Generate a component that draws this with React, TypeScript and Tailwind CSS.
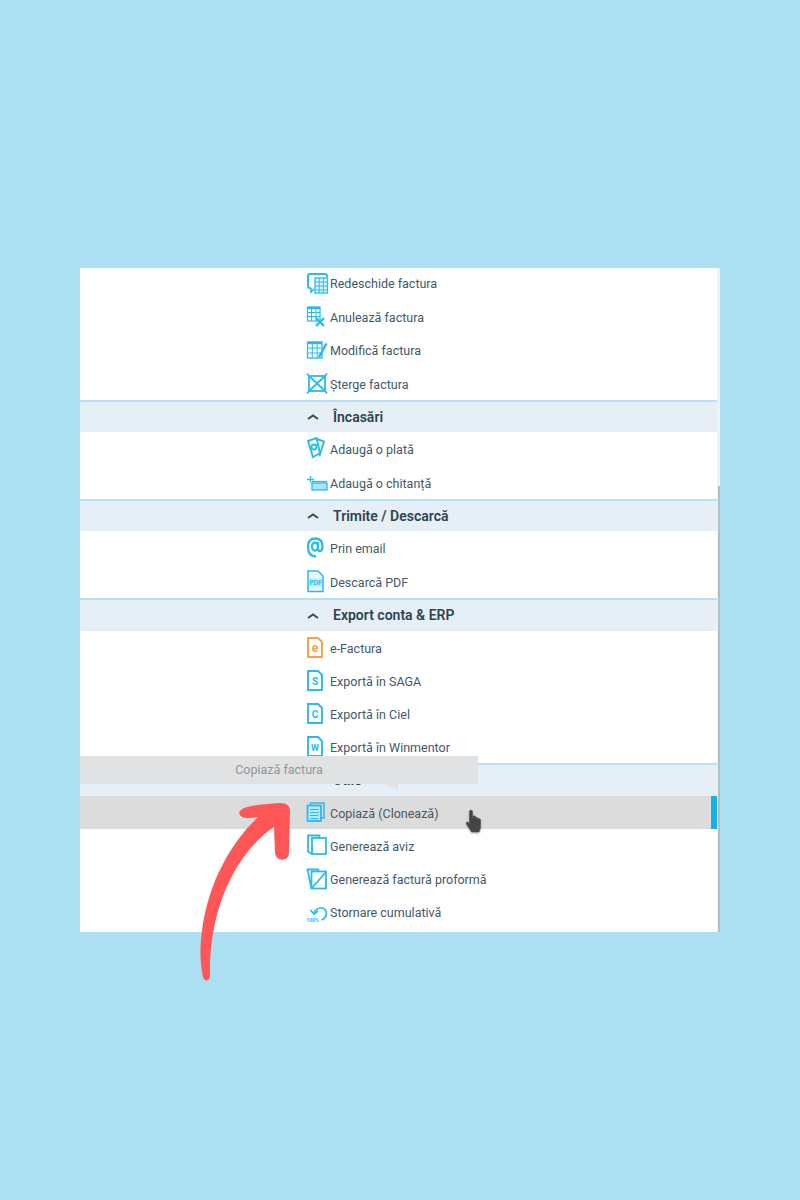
import React from "react";

const B = "#29bbec";

const Svg = ({ children, w = 1.6 }: { children: React.ReactNode; w?: number }) => (
  <svg width="24" height="24" viewBox="0 0 24 24" fill="none" stroke={B} strokeWidth={w} className="shrink-0">
    {children}
  </svg>
);

const Doc = ({ letter, size, color = B }: { letter: string; size: number; color?: string }) => (
  <svg width="24" height="24" viewBox="0 0 24 24" fill="none" stroke={color} strokeWidth="1.9" className="shrink-0">
    <path d="M2 3h10l4 4v15H2z" />
    <text x="9" y="16.500" textAnchor="middle" fontSize={size} fontFamily="Roboto, sans-serif" fontWeight="700" fill={color} stroke="none">
      {letter}
    </text>
  </svg>
);

const icons: Record<string, React.ReactNode> = {
  reopen: (
    <Svg>
      <path d="M5 16H3.500Q2 16 2 14V4Q2 2 4 2h15q2 0 2 2v1" strokeWidth="2" />
      <path d="M5 16v4l3-3" />
      <rect x="9" y="6" width="12.500" height="15" fill="#e4f6fc" strokeWidth="1.3" />
      <path d="M9 10h12.500M9 14h12.500M9 18h12.500M13.200 6v15M17.300 6v15" strokeWidth="1" />
    </Svg>
  ),
  cancel: (
    <Svg>
      <rect x="1.500" y="2" width="12.500" height="14" strokeWidth="1.2" />
      <path d="M1.500 3h12.500" strokeWidth="2.400" />
      <path d="M1.500 7.500h12.500M1.500 11.500h12.500M5.500 2v14M10 2v14" strokeWidth="1" />
      <path d="M10 13l8 8M18 13l-8 8" strokeWidth="2.400" />
    </Svg>
  ),
  edit: (
    <Svg>
      <rect x="1.500" y="4" width="14.500" height="16" strokeWidth="1.300" />
      <path d="M1.500 5h14.500" strokeWidth="2.400" />
      <path d="M1.500 10h14.500M1.500 15h14.500M6.300 4v16M11.200 4v16" strokeWidth="1" />
      <path d="M13 19l7.500-13.500" strokeWidth="2.400" />
    </Svg>
  ),
  del: (
    <Svg w={1.8}>
      <rect x="3" y="5" width="16" height="15" />
      <path d="M3 5l16 15M19 5L3 20M1 2.500l2 2.500M21 2.500L19 5M1 22.500L3 20M21 22.500L19 20" />
    </Svg>
  ),
  pay: (
    <Svg w={1.900}>
      <path d="M2 5l8.500-3L14 17l-7 4z" />
      <circle cx="8" cy="11" r="2.500" />
      <path d="M11 3l7 2.500L13.500 20" />
    </Svg>
  ),
  receipt: (
    <Svg w={1.300}>
      <path d="M1 9.500h7M4.500 6v7" />
      <rect x="6" y="13" width="15" height="7" fill="#a9e4f8" />
      <path d="M6 11.500h15" />
    </Svg>
  ),
  at: (
    <Svg w={2.300}>
      <ellipse cx="9" cy="11.500" rx="3" ry="4" />
      <path d="M12 7v6.500Q12 16 14 16q2.500 0 2.500-5Q16.500 3.500 9 3.500 2 3.500 2 12q0 9.500 8 9.500" />
    </Svg>
  ),
  pdf: (
    <Svg w={1.500}>
      <path d="M2 2h10l5 5v15.500H2z" fill="#e9f8fd" />
      <rect x="3" y="9.500" width="13" height="8" fill="#bcecfa" stroke="none" />
      <text x="9.500" y="16.200" textAnchor="middle" fontSize="6.500" fontFamily="Roboto, sans-serif" fontWeight="700" fill={B} stroke="none">
        PDF
      </text>
    </Svg>
  ),
  e: <Doc letter="e" size={12} color="#f8a145" />,
  s: <Doc letter="S" size={10} />,
  c: <Doc letter="C" size={10} />,
  w: <Doc letter="W" size={9} />,
  copy: (
    <Svg w={1.500}>
      <path d="M4.500 5V3H18v15h-3" />
      <rect x="1.500" y="5.500" width="13.500" height="15.500" fill="#b5e9f9" strokeWidth="1.800" />
      <path d="M4 9.500h8.500M4 12.500h8.500M4 15.500h8.500M4 18.500h8.500" strokeWidth="1.200" />
    </Svg>
  ),
  aviz: (
    <Svg w={1.800}>
      <path d="M6 21l-4-2.500V2.500h11.500V4.500" />
      <rect x="6" y="5" width="14" height="16" />
    </Svg>
  ),
  proforma: (
    <Svg w={1.800}>
      <path d="M5.500 21.500L1.500 2.500H12l1 2" />
      <rect x="5.500" y="4.500" width="14.500" height="17" />
      <path d="M6 21L20 5" />
    </Svg>
  ),
  storno: (
    <Svg w={1.700}>
      <path d="M8 13q2-5 7-5t5.500 5q0 5-5 7" />
      <path d="M4.500 10l3.500 4 4-3" />
      <text x="6.500" y="21.500" textAnchor="middle" fontSize="5" fontFamily="Roboto, sans-serif" fontWeight="700" fill={B} stroke="none">
        100%
      </text>
    </Svg>
  ),
};

const Item = ({ icon, label, h, active, tx = "pt-[2px]" }: { icon: string; label: string; h: string; active?: boolean; tx?: string }) => (
  <div className={`flex items-center pl-[226px] ${h} ${active ? "bg-[#dcdcdc] border-r-[6px] border-[#0fb5e8]" : ""}`}>
    <span className="mb-[2px] flex h-6 w-6 items-center justify-center">{icons[icon]}</span>
    <span className={`${tx} text-[12.5px] text-[#43586a]`}>{label}</span>
  </div>
);

const Section = ({ label, h = "h-[32px]" }: { label: string; h?: string }) => (
  <div className={`flex items-center bg-[#e6eff5] border-t-2 border-[#b6e0f3] pl-[227px] ${h}`}>
    <svg width="12" height="8" viewBox="0 0 12 8" fill="none" stroke="#334b5a" strokeWidth="1.900">
      <path d="M1 6L6 2.500 11 6" />
    </svg>
    <span className="ml-[14px] text-[14px] font-semibold text-[#2d4452]">{label}</span>
  </div>
);

export default function App() {
  return (
    <div className="min-h-[1200px] bg-[#addff3] px-20 pt-[268px] [font-family:Roboto,sans-serif]">
      <div className="relative flex w-[640px] bg-white">
        <div className="w-[637px] shrink-0">
          <Item icon="reopen" label="Redeschide factura" h="h-[33px]" tx="pt-0" />
          <Item icon="cancel" label="Anulează factura" h="h-[33px]" />
          <Item icon="edit" label="Modifică factura" h="h-[33px]" />
          <Item icon="del" label="Șterge factura" h="h-[33px]" tx="pt-[4px]" />
          <Section label="Încasări" />
          <Item icon="pay" label="Adaugă o plată" h="h-[34px]" />
          <Item icon="receipt" label="Adaugă o chitanță" h="h-[33px]" tx="pt-[4px]" />
          <Section label="Trimite / Descarcă" />
          <Item icon="at" label="Prin email" h="h-[34px]" />
          <Item icon="pdf" label="Descarcă PDF" h="h-[33px]" tx="pt-[4px]" />
          <Section label="Export conta & ERP" h="h-[33px]" />
          <Item icon="e" label="e-Factura" h="h-[33px]" tx="pt-[4px]" />
          <Item icon="s" label="Exportă în SAGA" h="h-[33px]" tx="pt-[4px]" />
          <Item icon="c" label="Exportă în Ciel" h="h-[33px]" tx="pt-[4px]" />
          <Item icon="w" label="Exportă în Winmentor" h="h-[33px]" tx="pt-[4px]" />
          <Section label="Utile" h="h-[33px]" />
          <Item icon="copy" label="Copiază (Clonează)" h="h-[33px]" active tx="pt-[4px]" />
          <Item icon="aviz" label="Generează aviz" h="h-[34px]" />
          <Item icon="proforma" label="Generează factură proformă" h="h-[33px]" />
          <Item icon="storno" label="Stornare cumulativă" h="h-[33px]" />
          <div className="h-[3px]" />
        </div>
        <div className="flex w-[3px] flex-col">
          <div className="h-[218px] bg-[#f1f2f3]" />
          <div className="flex-1 border-l border-[#eef0f1] bg-[#bcbcbc]" />
        </div>

        {/* tooltip */}
        <div className="absolute left-0 top-[488px] flex h-[28px] w-[398px] items-center justify-center bg-[#e1e2e3] pt-[1px] text-[12.5px] text-[#90959a]">
          Copiază factura
          <span className="absolute left-[304px] top-[28px] h-0 w-0 border-r-[14px] border-t-[6px] border-r-transparent border-t-[#e1e2e3] [transform:scaleX(-1)]" />
        </div>

        {/* hand cursor */}
        <svg className="absolute left-[384px] top-[541px] drop-shadow-[0_1px_1px_rgba(0,0,0,0.3)]" width="24" height="26" viewBox="0 0 24 26">
          <path
            d="M5.500 2.500c0-1.800 3-1.800 3 0V9l.5.100V7.800c0-1.300 2.500-1.300 2.500 0v1.700c0-1.300 2.500-1.300 2.500 0v1c0-1.200 2.500-1.200 2.500.3V17c0 3-1 5-1.500 6H7.500L2.500 15c-1-1.500.8-2.800 2-1.500l1 1.200z"
            fill="#454545"
            stroke="#555"
            strokeWidth="0.6"
          />
        </svg>

        {/* arrow */}
        <svg className="absolute left-[110px] top-[530px]" width="110" height="190" viewBox="190 798 110 190">
          <path
            d="M239 813C241 806 255 805 280 803C287 803 290 806 290 811L289 853C289 862 275 862 275 852L274 827C243 848 219 890 212 940C210 955 210 965 210 977C209 982 204 981 203 977C200 962 200 950 201 940C205 890 228 845 258 817C250 818 241 820 239 813Z"
            fill="#ff5757"
          />
        </svg>
      </div>
    </div>
  );
}
